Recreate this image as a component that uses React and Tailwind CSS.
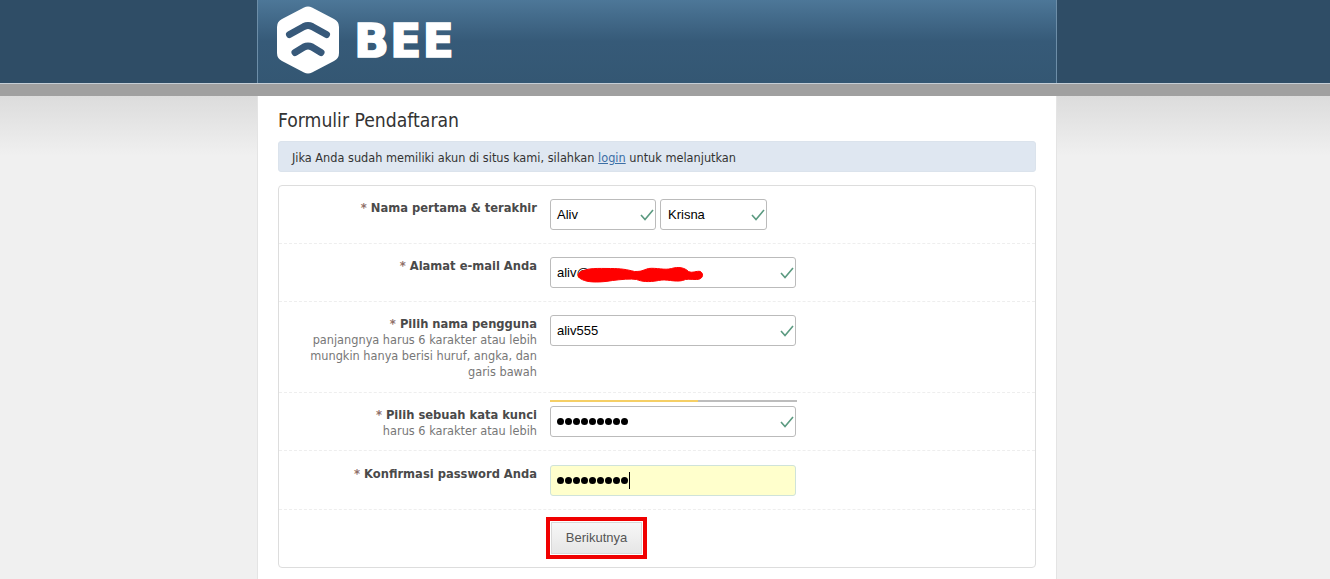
import React from "react";

const Check = () => (
  <svg className="absolute right-[1px] top-[9px]" width="14" height="12" viewBox="0 0 14 12" fill="none">
    <path d="M1 6 L5 10.5 L13 1" stroke="#5b9a80" strokeWidth="1.6" />
  </svg>
);

const Field = ({ w, value, check = true, pw = false, focus = false, pl = "pl-[6px]", children }) => (
  <div className={`relative h-[31px] rounded-[3px] border flex items-center text-[13px] text-black font-['Liberation_Sans',sans-serif] ${pl} ${w} ${focus ? "border-[#cfe3da] bg-[#ffffcc]" : "border-[#bbbbbb] bg-white"}`}>
    {pw ? (
      <span className="flex items-center gap-[1px]">
        {Array.from({ length: 9 }).map((_, i) => (
          <span key={i} className="w-[7px] h-[7px] rounded-full bg-black" />
        ))}
        {focus && <span className="w-px h-[17px] bg-black" />}
      </span>
    ) : (
      <span>{value}</span>
    )}
    {check && <Check />}
    {children}
  </div>
);

const Row = ({ h, last, label, hint, pt = "pt-[14px]", children }) => (
  <div className={`flex ${h} ${last ? "" : "border-b border-dashed border-[#eeeeee]"}`}>
    <div className={`w-[259px] pr-px text-right text-[12.6px] leading-[16px] ${pt}`}>
      <div className="font-bold text-[#4a4a4a] text-[12.8px]">
        <span className="text-[#8f7068]">* </span>
        {label}
      </div>
      {hint && <div className="text-[#777777]">{hint}</div>}
    </div>
    <div className="ml-[12px] flex-1">{children}</div>
  </div>
);

export default function App() {
  return (
    <div className="h-[579px] overflow-hidden font-['DejaVu_Sans_Condensed','DejaVu_Sans',sans-serif] bg-[#f0f0f0]">
      <header className="h-[84px] bg-[#2f4d66] border-b border-[#c5ced6]">
        <div className="ml-[257px] w-[800px] h-full border-x border-[#6d8ea8] bg-gradient-to-b from-[#4d7798] via-[#365a78] to-[#345773] flex items-center pl-[20px] gap-[15px]">
          <svg width="62" height="68" viewBox="0 0 62 68" className="mt-[-4px] ml-[-1px]">
            <path d="M27 1.5 Q31 -0.5 35 1.5 L57 13 Q62 15.5 62 21 L62 47 Q62 52.5 57 55 L35 66.5 Q31 68.5 27 66.5 L5 55 Q0 52.5 0 47 L0 21 Q0 15.5 5 13 Z" fill="#fff" />
            <path d="M12.5 28.5 L27 20.5 Q31 18.5 35 20.5 L49.5 28.5" fill="none" stroke="#37597a" strokeWidth="7" strokeLinecap="round" strokeLinejoin="round" />
            <path d="M18 46.5 L27 41 Q31 39 35 41 L44 46.5" fill="none" stroke="#37597a" strokeWidth="7" strokeLinecap="round" strokeLinejoin="round" />
          </svg>
          <span className="text-[46px] leading-none font-bold text-white font-['DejaVu_Sans',sans-serif] mt-[-2px] tracking-[1px] [-webkit-text-stroke:1.5px_white]">BEE</span>
        </div>
      </header>
      <div className="h-[12px] bg-[#a0a0a0]" />
      <div className="bg-gradient-to-b from-[#dcdcdc] to-[#f0f0f0] h-[60px] mb-[-60px]" />
      <main className="relative ml-[257px] w-[800px] h-[483px] bg-white border-x border-[#e4e4e4] px-[20px]">
        <h1 className="pt-[13px] text-[19.2px] leading-[24px] text-[#333333]">Formulir Pendaftaran</h1>
        <div className="mt-[8px] h-[31px] rounded-[3px] border border-[#dbe3ec] bg-[#dfe7f1] flex items-center pl-[13px] pt-[3px] text-[12.6px] text-[#333333]">
          <span>Jika Anda sudah memiliki akun di situs kami, silahkan <span className="text-[#3b6ea5] underline">login</span> untuk melanjutkan</span>
        </div>
        <div className="mt-[13px] rounded-[4px] border border-[#dddddd] h-[383px]">
          <Row h="h-[58px]" label="Nama pertama & terakhir">
            <div className="flex gap-[4px] pt-[13px]">
              <Field w="w-[106px]" value="Aliv" />
              <Field w="w-[107px]" pl="pl-[7px]" value="Krisna" />
            </div>
          </Row>
          <Row h="h-[58px]" label="Alamat e-mail Anda">
            <div className="pt-[13px]">
              <Field w="w-[246px]" value="aliv@">
                <svg className="absolute left-[25px] top-[8px]" width="128" height="17" viewBox="-0.5 -0.5 128 17">
                  <path d="M3 6 C10 1 22 2 34 2 C45 2 50 3 58 5 C66 5 65 4 72 2 C80 1 88 4 95 2 C102 0 108 1 112 5 C116 7 120 4 124 5 C128 8 126 13 120 13 C114 13 110 12 106 14 C98 16 90 12 82 14 C72 16 65 15 60 13 C54 12 44 13 36 14 C24 16 14 16 8 14 C2 12 0 9 3 6 Z" fill="#ff0000" stroke="#ff0000" strokeWidth="1" />
                </svg>
              </Field>
            </div>
          </Row>
          <Row h="h-[91px]" label="Pilih nama pengguna" hint={<>panjangnya harus 6 karakter atau lebih<br />mungkin hanya berisi huruf, angka, dan<br />garis bawah</>}>
            <div className="pt-[13px]">
              <Field w="w-[246px]" value="aliv555" />
            </div>
          </Row>
          <Row h="h-[58px]" label="Pilih sebuah kata kunci" hint="harus 6 karakter atau lebih">
            <div className="pt-[7px]">
              <div className="flex w-[247px] h-[2px] mb-[4px]">
                <div className="w-[148px] bg-[#f5cf66]" />
                <div className="flex-1 bg-[#bdbdbd]" />
              </div>
              <Field w="w-[246px]" pw />
            </div>
          </Row>
          <Row h="h-[59px]" pt="pt-[15px]" label="Konfirmasi password Anda">
            <div className="pt-[14px]">
              <Field w="w-[246px]" pw focus check={false} />
            </div>
          </Row>
          <div className="pl-[267px] pt-[7px]">
            <div className="w-[101px] h-[42px] border-[4px] border-[#f00000] p-px">
              <button className="w-full h-full bg-gradient-to-b from-[#f7f7f7] to-[#e6e6e6] border border-[#d8d8d8] text-[13px] text-[#555555] font-['Liberation_Sans',sans-serif]">Berikutnya</button>
            </div>
          </div>
        </div>
      </main>
    </div>
  );
}
